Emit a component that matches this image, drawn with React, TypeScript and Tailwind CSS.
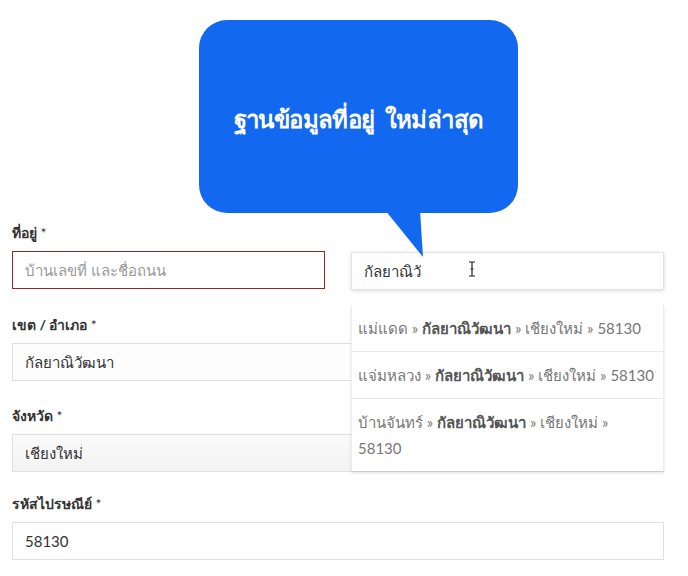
import React from "react";

const font = { fontFamily: "Lato, 'Noto Sans', 'DejaVu Sans', sans-serif" };

type Suggestion = { sub: string; district: string; province: string; zip: string; wrap?: boolean };

const SUGGESTIONS: Suggestion[] = [
  { sub: "แม่แดด", district: "กัลยาณิวัฒนา", province: "เชียงใหม่", zip: "58130" },
  { sub: "แจ่มหลวง", district: "กัลยาณิวัฒนา", province: "เชียงใหม่", zip: "58130" },
  { sub: "บ้านจันทร์", district: "กัลยาณิวัฒนา", province: "เชียงใหม่", zip: "58130", wrap: true },
];

function Label({ text }: { text: string }) {
  return (
    <label className="block h-5 leading-5 mb-2 text-[14px] font-bold text-[#333]">
      {text} <span className="font-normal">*</span>
    </label>
  );
}

function Bubble() {
  return (
    <div className="absolute left-[199px] top-[20px] w-[319px] h-[193px] z-20">
      <div className="w-full h-full rounded-[28px] bg-[#1268ee] flex items-center justify-center pt-[4px]">
        <p className="text-white text-[24px] font-bold tracking-tight">
          ฐานข้อมูลที่อยู่<span className="inline-block w-[10px]" />ใหม่ล่าสุด
        </p>
      </div>
      <svg className="absolute left-[186px] top-[190px]" width="40" height="50" viewBox="0 0 40 50">
        <polygon points="0,0 35,0 38,47" fill="#1268ee" />
      </svg>
    </div>
  );
}

function Dropdown() {
  return (
    <div className="absolute left-0 top-[82px] w-full bg-white border-x border-[#eeeeee] shadow-[0_2px_3px_rgba(0,0,0,0.12)] z-10">
      {SUGGESTIONS.map((s, i) => (
        <div
          key={i}
          className={`px-[6px] py-[10px] text-[15px] leading-[26px] text-[#777] ${i < SUGGESTIONS.length - 1 ? "border-b border-[#e8e8e8]" : ""}`}
        >
          {s.sub} » <b className="font-bold text-[#555]">{s.district}</b> » {s.province} »
          {s.wrap ? <br /> : " "}
          {s.zip}
        </div>
      ))}
    </div>
  );
}

export default function App() {
  return (
    <div className="relative w-[688px] h-[576px] bg-white overflow-hidden" style={font}>
      <Bubble />
      <div className="pt-[223px] pl-[12px] w-[664px]">
        <div className="grid grid-cols-2 gap-[26px]">
          <div>
            <Label text="ที่อยู่" />
            <div className="h-[38px] border border-[#8a2a2a] bg-white flex items-center px-[12px] text-[15px] text-[#9a9a9a]">
              บ้านเลขที่ และชื่อถนน
            </div>
          </div>
          <div className="relative pt-[29px]">
            <div className="relative h-[38px] border border-[#e2e2e2] bg-white shadow-[0_1px_4px_rgba(0,0,0,0.14)] flex items-center px-[12px] text-[15px] text-[#333]">
              กัลยาณิวั
              <svg className="absolute left-[115px] top-[8px]" width="10" height="16" viewBox="0 0 10 16">
                <path d="M2 1h6M5 1v14M2 15h6M3.5 8h3" stroke="#222" strokeWidth="1.2" fill="none" />
              </svg>
            </div>
            <Dropdown />
          </div>
        </div>

        <div className="mt-[25px]">
          <Label text="เขต / อำเภอ" />
          <div className="h-[38px] border border-[#e0e0e0] bg-[#fdfdfd] flex items-center px-[12px] text-[15px] text-[#333]">
            กัลยาณิวัฒนา
          </div>
        </div>

        <div className="mt-[25px]">
          <Label text="จังหวัด" />
          <div className="h-[38px] border border-[#e0e0e0] bg-gradient-to-b from-[#fafafa] to-[#f3f3f3] flex items-center px-[12px] text-[15px] text-[#333]">
            เชียงใหม่
          </div>
        </div>

        <div className="mt-[22px]">
          <Label text="รหัสไปรษณีย์" />
          <div className="h-[38px] border border-[#e0e0e0] bg-white flex items-center px-[12px] text-[15px] text-[#333]">
            58130
          </div>
        </div>
      </div>
    </div>
  );
}
